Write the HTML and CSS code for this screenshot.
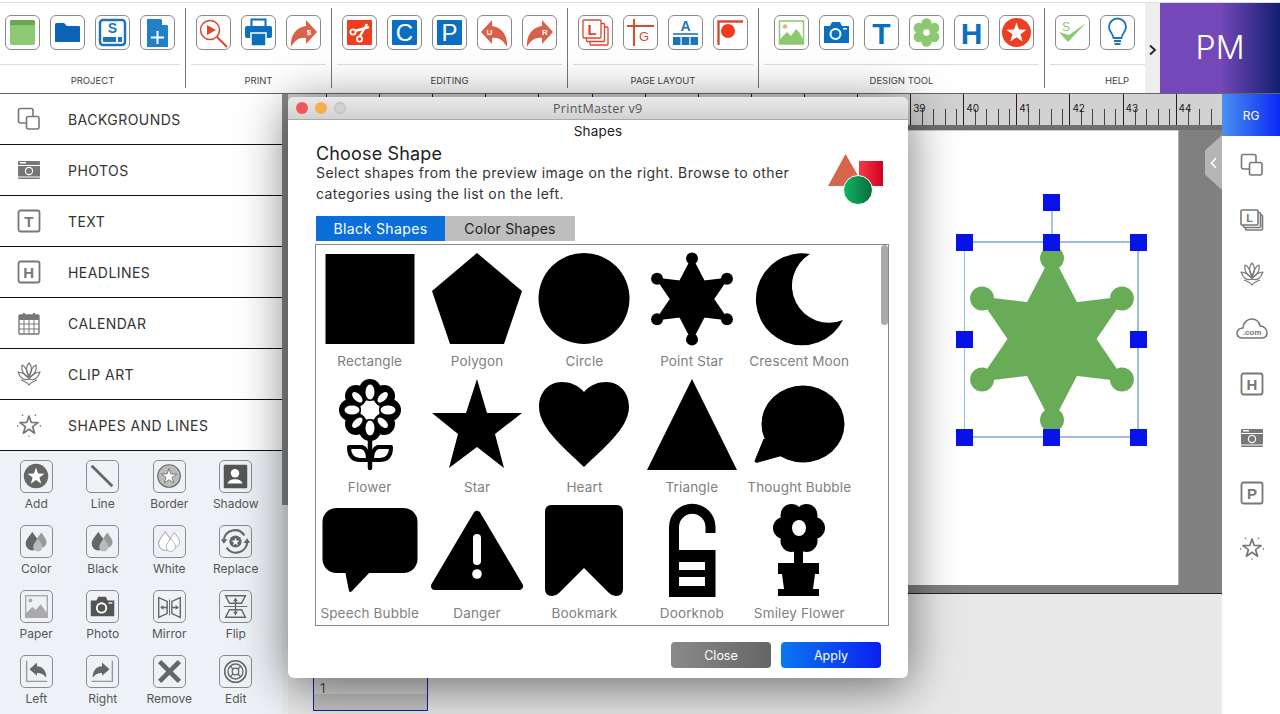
FILE: index.html
```html
<!DOCTYPE html>
<html lang="en">
<head>
  <meta charset="UTF-8" />
  <meta name="viewport" content="width=device-width, initial-scale=1.0"/>
  <title>PrintMaster v9</title>
  <link rel="stylesheet" href="styles.css">
</head>
<body>
  <svg class="defs" aria-hidden="true">
    <defs>
      <polygon id="star5" points="0,-10 2.35,-3.24 9.51,-3.09 3.8,1.24 5.88,8.09 0,4 -5.88,8.09 -3.8,1.24 -9.51,-3.09 -2.35,-3.24"/>
      <g id="sheriff">
        <polygon points="50,6 63,31 88,28 73,50 88,72 63,69 50,94 37,69 12,72 27,50 12,28 37,31" stroke-width="2" stroke-linejoin="round" stroke="currentColor"/>
        <circle cx="50" cy="6" r="6.5"/><circle cx="88" cy="28" r="6.5"/><circle cx="88" cy="72" r="6.5"/>
        <circle cx="50" cy="94" r="6.5"/><circle cx="12" cy="72" r="6.5"/><circle cx="12" cy="28" r="6.5"/>
      </g>
      <path id="arrow" d="M30 16 L19 4 V10 C9 11 3 20 4 31 C8 24 13 21 19 22 V28 Z"/>
      <g id="drop3">
        <path d="M12 6 C15 11 19 14 19 19 A7 7 0 0 1 5 19 C5 14 9 11 12 6Z"/>
      </g>
      <symbol id="i-bg" viewBox="0 0 24 24"><rect x="1.500" y="1.500" width="14.500" height="14.500" rx="2" fill="none" stroke="#777" stroke-width="1.600"/><rect x="9.500" y="9.500" width="12.500" height="12.500" rx="2" fill="#fff" stroke="#777" stroke-width="1.600"/></symbol>
      <symbol id="i-photo" viewBox="0 0 24 24"><rect x="1" y="3" width="22" height="18" rx="1" fill="#777"/><rect x="3" y="4" width="6" height="1.500" fill="#fff"/><rect x="1" y="7" width="22" height="1" fill="#fff"/><rect x="1" y="18.500" width="22" height="1" fill="#fff"/><circle cx="12" cy="13" r="3.600" fill="#777" stroke="#fff" stroke-width="1.200"/></symbol>
      <symbol id="i-t" viewBox="0 0 24 24"><rect x="1.500" y="1.500" width="21" height="21" rx="2" fill="none" stroke="#777" stroke-width="1.800"/><text x="12" y="17.500" class="ic-t" font-size="15" fill="#777">T</text></symbol>
      <symbol id="i-h" viewBox="0 0 24 24"><rect x="1.500" y="1.500" width="21" height="21" rx="2" fill="none" stroke="#777" stroke-width="1.800"/><text x="12" y="17.500" class="ic-t" font-size="15" fill="#777">H</text></symbol>
      <symbol id="i-p" viewBox="0 0 24 24"><rect x="1.500" y="1.500" width="21" height="21" rx="2" fill="none" stroke="#777" stroke-width="1.800"/><text x="12" y="17.500" class="ic-t" font-size="15" fill="#777">P</text></symbol>
      <symbol id="i-cal" viewBox="0 0 24 24"><rect x="2" y="4" width="20" height="19" rx="1" fill="none" stroke="#777" stroke-width="1.400"/><rect x="2" y="4" width="20" height="5" fill="#777"/><path d="M2 13H22M2 18H22M7 9V23M12 9V23M17 9V23" stroke="#777" stroke-width="1"/><path d="M7 6V2M17 6V2" stroke="#777" stroke-width="2"/></symbol>
      <symbol id="i-lotus" viewBox="0 0 24 24"><g fill="none" stroke="#777" stroke-width="1.200" stroke-linejoin="round"><path d="M12 1 C15 4 16 8 12 15 C8 8 9 4 12 1Z"/><path d="M5 3 C8 4 10 7 12 15 C6 13 4 9 5 3Z"/><path d="M19 3 C16 4 14 7 12 15 C18 13 20 9 19 3Z"/><path d="M1 10 C5 10 9 13 12 17 C7 19 3 16 1 10Z"/><path d="M23 10 C19 10 15 13 12 17 C17 19 21 16 23 10Z"/><path d="M4 18 C8 20 10 20 12 23 C14 20 16 20 20 18"/></g></symbol>
      <symbol id="i-shapes" viewBox="0 0 24 24"><use href="#star5" transform="translate(12 12.500) scale(.950)" fill="none" stroke="#777" stroke-width="1.800" stroke-linejoin="round"/><path d="M5 1.500L6 3M19 1.500L18 3M0 13H1.200M24 13H22.800M12 22.500V23.800" stroke="#777" stroke-width="1.300"/></symbol>
      <symbol id="i-layers" viewBox="0 0 24 24"><g fill="#fff" stroke="#777" stroke-width="1.600"><rect x="5.500" y="7" width="17" height="15" rx="1"/><rect x="3.500" y="4.500" width="17" height="15" rx="1"/><rect x="1" y="2" width="17" height="15" rx="1"/></g><text x="9.500" y="13.500" class="ic-t" font-size="11" fill="#777">L</text></symbol>
      <symbol id="i-cloud" viewBox="0 0 32 24"><path d="M7 21 C3 21 1 19 1 16 C1 13 4 11 7 11 C7 6 11 2 16 2 C20 2 23 5 24 9 C28 9 31 12 31 16 C31 19 29 21 25 21Z" fill="none" stroke="#777" stroke-width="1.500"/><text x="16" y="18" class="ic-t" font-size="8" fill="#777">.com</text></symbol>
    </defs>
  </svg>

  <header class="toolbar">
    <div class="grp grp-project">
      <div class="btns">
        <div class="tb"><svg viewBox="0 0 33 33"><rect x="4" y="4" width="25" height="25" rx="2" fill="#8dc973"/><path d="M4 9V6Q4 4 6 4H27Q29 4 29 6V9Z" fill="#6ea552"/></svg></div>
        <div class="tb"><svg viewBox="0 0 33 33"><path d="M4 9Q4 7 6 7H13L16 10H28Q29 10 29 11V26H4Z" fill="#0a63b5"/></svg></div>
        <div class="tb"><svg viewBox="0 0 33 33"><rect x="4" y="4" width="25" height="25" rx="3" fill="none" stroke="#1c75bc" stroke-width="2.500"/><text x="16.500" y="17" class="ic-t" font-size="14" fill="#1c75bc">S</text><rect x="7" y="21" width="13" height="5" fill="#1c75bc"/><rect x="22" y="21" width="4" height="5" fill="#1c75bc"/></svg></div>
        <div class="tb"><svg viewBox="0 0 33 33"><path d="M6 3H20L27 10V31H6Z" fill="#2280c8"/><path d="M21 3L27 9H21Z" fill="#fff"/><path d="M16.500 15V28M10 21.500H23" stroke="#fff" stroke-width="2"/></svg></div>
      </div>
      <div class="rule"></div>
      <div class="grp-label">PROJECT</div>
    </div>
    <div class="grp grp-print">
      <div class="btns">
        <div class="tb"><svg viewBox="0 0 33 33"><circle cx="13" cy="14" r="9.500" fill="none" stroke="#e0452c" stroke-width="1.500"/><path d="M10 9L19 14L10 19Z" fill="#e0452c"/><path d="M20 21L30 31" stroke="#e0452c" stroke-width="2"/></svg></div>
        <div class="tb"><svg viewBox="0 0 33 33"><rect x="9.500" y="3.500" width="14" height="8" fill="#fff" stroke="#0b6fbb" stroke-width="2"/><rect x="3" y="10" width="27" height="12" rx="2" fill="#0b6fbb"/><rect x="9" y="17" width="15" height="13" fill="#0b6fbb" stroke="#fff" stroke-width="1.500"/></svg></div>
        <div class="tb"><svg viewBox="0 0 33 33"><use href="#arrow" fill="#d9604a"/><text x="22" y="19" class="ic-t" font-size="8" fill="#fff">$</text></svg></div>
      </div>
      <div class="rule"></div>
      <div class="grp-label">PRINT</div>
    </div>
    <div class="grp grp-editing">
      <div class="btns">
        <div class="tb"><svg viewBox="0 0 33 33"><rect x="4" y="4" width="25" height="25" rx="1" fill="#ef3e1e"/><g fill="none" stroke="#fff" stroke-width="1.800"><circle cx="10" cy="16" r="2.600"/><circle cx="16.500" cy="23" r="2.600"/></g><path d="M12 15L26 11M17 20L24 8" stroke="#fff" stroke-width="2.400"/></svg></div>
        <div class="tb"><svg viewBox="0 0 33 33"><rect x="4" y="4" width="25" height="25" rx="1" fill="#0a6fc0"/><text x="16.500" y="25" class="ic-r" font-size="24" fill="#fff">C</text></svg></div>
        <div class="tb"><svg viewBox="0 0 33 33"><rect x="4" y="4" width="25" height="25" rx="1" fill="#0a6fc0"/><text x="16.500" y="25" class="ic-r" font-size="24" fill="#fff">P</text></svg></div>
        <div class="tb"><svg viewBox="0 0 33 33"><use href="#arrow" transform="matrix(-1 0 0 1 33 0)" fill="#d9604a"/><text x="11.500" y="19" class="ic-t" font-size="8" fill="#fff">U</text></svg></div>
        <div class="tb"><svg viewBox="0 0 33 33"><use href="#arrow" fill="#d9604a"/><text x="22" y="19" class="ic-t" font-size="8" fill="#fff">R</text></svg></div>
      </div>
      <div class="rule"></div>
      <div class="grp-label">EDITING</div>
    </div>
    <div class="grp grp-layout">
      <div class="btns">
        <div class="tb"><svg viewBox="0 0 33 33"><g fill="#fff" stroke="#e0452c" stroke-width="1.300"><rect x="11" y="11" width="18" height="18" rx="1"/><rect x="7.500" y="7.500" width="18" height="18" rx="1"/><rect x="4" y="4" width="18" height="18" rx="1"/></g><text x="13" y="19" class="ic-t" font-size="15" fill="#e0452c">L</text></svg></div>
        <div class="tb"><svg viewBox="0 0 33 33"><path d="M3 10H30M10 3V30" stroke="#dc4a32" stroke-width="2"/><text x="20" y="25" class="ic-r" font-size="13" fill="#dc4a32">G</text></svg></div>
        <div class="tb"><svg viewBox="0 0 33 33"><text x="16.500" y="15" class="ic-t" font-size="14" fill="#1c75bc">A</text><path d="M4 18H29" stroke="#1c75bc" stroke-width="1.600"/><path d="M4 21H11.500V29H4ZM12.700 21H20.300V29H12.700ZM21.500 21H29V29H21.500Z" fill="#1c75bc"/></svg></div>
        <div class="tb"><svg viewBox="0 0 33 33"><path d="M29 5.500H4.500V29" fill="none" stroke="#dc4a32" stroke-width="2.400"/><circle cx="14" cy="15" r="7" fill="#f03a1c"/></svg></div>
      </div>
      <div class="rule"></div>
      <div class="grp-label">PAGE LAYOUT</div>
    </div>
    <div class="grp grp-design">
      <div class="btns">
        <div class="tb"><svg viewBox="0 0 33 33"><rect x="4.500" y="5" width="24" height="23" fill="#fff" stroke="#8dc973" stroke-width="1.500"/><circle cx="10" cy="10.500" r="2.300" fill="#e8b27a"/><path d="M5 28V23L12 16L16 20L21 13L24 16L28 23V28Z" fill="#8dc973"/></svg></div>
        <div class="tb"><svg viewBox="0 0 33 33"><path d="M4 10H10L12 6H20L22 10H29V27H4Z" fill="#0a6fc0"/><circle cx="15.500" cy="18" r="5" fill="none" stroke="#fff" stroke-width="2"/><rect x="23" y="12" width="4" height="1.500" fill="#fff"/></svg></div>
        <div class="tb"><svg viewBox="0 0 33 33"><text x="16.500" y="28" class="ic-t" font-size="30" fill="#0a6fc0">T</text></svg></div>
        <div class="tb"><svg viewBox="0 0 33 33"><g fill="#8dc973"><circle cx="16.500" cy="7.500" r="5.200"/><circle cx="16.500" cy="25.500" r="5.200"/><circle cx="8.800" cy="12" r="5.200"/><circle cx="24.200" cy="12" r="5.200"/><circle cx="8.800" cy="21" r="5.200"/><circle cx="24.200" cy="21" r="5.200"/><circle cx="16.500" cy="16.500" r="6"/></g><circle cx="16.500" cy="16.500" r="3.300" fill="#fff"/></svg></div>
        <div class="tb"><svg viewBox="0 0 33 33"><text x="16.500" y="28" class="ic-t" font-size="30" fill="#0a6fc0">H</text></svg></div>
        <div class="tb"><svg viewBox="0 0 33 33"><circle cx="16.500" cy="16.500" r="14.500" fill="#ee3f22"/><use href="#star5" transform="translate(16.500 17) scale(1.050)" fill="#fff"/></svg></div>
      </div>
      <div class="rule"></div>
      <div class="grp-label">DESIGN TOOL</div>
    </div>
    <div class="grp grp-help">
      <div class="btns">
        <div class="tb"><svg viewBox="0 0 33 33"><path d="M3 16L12 26L30 7L13 19Z" fill="#8dc973"/><text x="10" y="15" class="ic-r" font-size="12" fill="#8dc973">S</text></svg></div>
        <div class="tb"><svg viewBox="0 0 33 33"><path d="M12.500 22C12 17 8 16 8 11A8.500 8.500 0 0 1 25 11C25 16 21 17 20.500 22Z" fill="none" stroke="#1c75bc" stroke-width="1.800"/><path d="M13 25H20M13.500 28H19.500" stroke="#1c75bc" stroke-width="2"/></svg></div>
      </div>
      <div class="rule"></div>
      <div class="grp-label">HELP</div>
    </div>
    <div class="more">
      <svg viewBox="0 0 10 12"><path d="M2 1.500L7 6L2 10.500" fill="none" stroke="#222" stroke-width="1.800"/></svg>
    </div>
    <div class="brand">PM</div>
  </header>

  <div class="workspace">
    <aside class="panel">
      <div class="panel-main">
        <nav class="menu">
          <div class="menu-row"><svg class="menu-ic"><use href="#i-bg"/></svg>BACKGROUNDS</div>
          <div class="menu-row"><svg class="menu-ic"><use href="#i-photo"/></svg>PHOTOS</div>
          <div class="menu-row"><svg class="menu-ic"><use href="#i-t"/></svg>TEXT</div>
          <div class="menu-row"><svg class="menu-ic"><use href="#i-h"/></svg>HEADLINES</div>
          <div class="menu-row"><svg class="menu-ic"><use href="#i-cal"/></svg>CALENDAR</div>
          <div class="menu-row"><svg class="menu-ic"><use href="#i-lotus"/></svg>CLIP ART</div>
          <div class="menu-row"><svg class="menu-ic"><use href="#i-shapes"/></svg>SHAPES AND LINES</div>
        </nav>
        <div class="tools">
          <div class="tool"><div class="tool-ic"><svg viewBox="0 0 33 33"><circle cx="16" cy="16" r="13" fill="#666"/><use href="#star5" transform="translate(16 16.500) scale(.950)" fill="#fff"/></svg></div>Add</div>
          <div class="tool"><div class="tool-ic"><svg viewBox="0 0 33 33"><path d="M5 5L27 27" stroke="#666" stroke-width="3"/></svg></div>Line</div>
          <div class="tool"><div class="tool-ic"><svg viewBox="0 0 33 33"><circle cx="16" cy="16" r="12" fill="#bbb" stroke="#666" stroke-width="1.200"/><use href="#star5" transform="translate(16 16.500) scale(.850)" fill="#fff" stroke="#666"/></svg></div>Border</div>
          <div class="tool"><div class="tool-ic"><svg viewBox="0 0 33 33"><rect x="4" y="4" width="25" height="25" rx="1" fill="#555"/><circle cx="16" cy="13" r="4.500" fill="#fff"/><path d="M8 24C9 18 23 18 24 24Z" fill="#fff"/></svg></div>Shadow</div>
          <div class="tool"><div class="tool-ic"><svg viewBox="0 0 33 33"><use href="#drop3" fill="#666"/><use href="#drop3" transform="translate(12 2) scale(.800)" fill="#999"/><use href="#drop3" transform="translate(9.500 9) scale(.700)" fill="#bbb"/></svg></div>Color</div>
          <div class="tool"><div class="tool-ic"><svg viewBox="0 0 33 33"><use href="#drop3" fill="#666"/><use href="#drop3" transform="translate(12 2) scale(.800)" fill="#999"/><use href="#drop3" transform="translate(9.500 9) scale(.700)" fill="#bbb"/></svg></div>Black</div>
          <div class="tool"><div class="tool-ic"><svg viewBox="0 0 33 33"><g fill="#fff" stroke="#888" stroke-width=".9"><use href="#drop3"/><use href="#drop3" transform="translate(12 2) scale(.800)"/><use href="#drop3" transform="translate(9.500 9) scale(.700)"/></g></svg></div>White</div>
          <div class="tool"><div class="tool-ic"><svg viewBox="0 0 33 33"><path d="M4 15A12 12 0 0 1 26 10M29 17A12 12 0 0 1 7 23" fill="none" stroke="#666" stroke-width="2.200"/><path d="M1 14L8 14L4 19ZM32 18L25 18L29 13Z" fill="#666"/><circle cx="16.500" cy="16.500" r="6.500" fill="#666"/><use href="#star5" transform="translate(16.500 17) scale(.450)" fill="#fff"/></svg></div>Replace</div>
          <div class="tool"><div class="tool-ic"><svg viewBox="0 0 33 33"><rect x="5" y="5" width="23" height="23" fill="none" stroke="#aaa" stroke-width="1.500"/><circle cx="10" cy="10" r="2" fill="#aaa"/><path d="M5 28V24L12 17L16 20L21 14L28 24V28Z" fill="#aaa"/></svg></div>Paper</div>
          <div class="tool"><div class="tool-ic"><svg viewBox="0 0 33 33"><path d="M4 10H10L12 6H20L22 10H29V27H4Z" fill="#555"/><circle cx="15.500" cy="18" r="5" fill="none" stroke="#fff" stroke-width="2"/><rect x="23" y="12" width="4" height="1.500" fill="#fff"/></svg></div>Photo</div>
          <div class="tool"><div class="tool-ic"><svg viewBox="0 0 33 33"><path d="M5 7L14 11V24L5 28ZM28 7L19 11V24L28 28Z" fill="none" stroke="#666" stroke-width="1.500"/><path d="M16.500 9V26" stroke="#666"/><path d="M8 17.500H14M25 17.500H19" stroke="#666" stroke-width="1.500"/><path d="M10 15L6.500 17.500L10 20ZM23 15L26.500 17.500L23 20Z" fill="#666"/></svg></div>Mirror</div>
          <div class="tool"><div class="tool-ic"><svg viewBox="0 0 33 33"><path d="M6 5L27 5L23 13H10ZM6 28L27 28L23 20H10Z" fill="none" stroke="#666" stroke-width="1.500"/><path d="M4 16.500H29" stroke="#666"/><path d="M16.500 9V24" stroke="#666" stroke-width="1.500"/><path d="M14 11L16.500 7L19 11ZM14 22L16.500 26L19 22Z" fill="#666"/></svg></div>Flip</div>
          <div class="tool"><div class="tool-ic"><svg viewBox="0 0 33 33"><path d="M6 5V27H28" fill="none" stroke="#999" stroke-width="1.500"/><path d="M9 14L17 7V11C23 11 27 16 27 23C24 19 21 18 17 18V21Z" fill="#666"/></svg></div>Left</div>
          <div class="tool"><div class="tool-ic"><svg viewBox="0 0 33 33"><path d="M27 5V27H5" fill="none" stroke="#999" stroke-width="1.500"/><path d="M24 14L16 7V11C10 11 6 16 6 23C9 19 12 18 16 18V21Z" fill="#666"/></svg></div>Right</div>
          <div class="tool"><div class="tool-ic"><svg viewBox="0 0 33 33"><path d="M6 6L27 27M27 6L6 27" stroke="#666" stroke-width="5"/></svg></div>Remove</div>
          <div class="tool"><div class="tool-ic"><svg viewBox="0 0 33 33"><g fill="none" stroke="#666"><circle cx="16.500" cy="16.500" r="11.500" stroke-width="1.600"/><circle cx="16.500" cy="16.500" r="8" stroke-width="1.400"/><circle cx="16.500" cy="16.500" r="3.500" stroke-width="1.400"/><path d="M11 11L14 14M22 11L19 14M11 22L14 19M22 22L19 19" stroke-width="1.400"/></g></svg></div>Edit</div>
        </div>
      </div>
      <div class="panel-scroll"><div class="panel-thumb"></div></div>
    </aside>

    <main class="stage">
      <div class="ruler">
        <div class="ruler-track">
          <div class="tick"></div><div class="tick"></div><div class="tick"></div><div class="tick"></div>
          <div class="tick"></div><div class="tick"></div><div class="tick"></div><div class="tick"></div>
          <div class="tick"></div><div class="tick"></div><div class="tick"></div><div class="tick"></div>
          <div class="tick">39</div><div class="tick">40</div><div class="tick">41</div><div class="tick">42</div>
          <div class="tick">43</div><div class="tick">44</div>
        </div>
      </div>
      <div class="canvas">
        <div class="page">
          <div class="selection">
            <div class="rotate-stem"></div>
            <span class="handle h-rot"></span>
            <span class="handle h-tl"></span><span class="handle h-tc"></span><span class="handle h-tr"></span>
            <span class="handle h-ml"></span><span class="handle h-mr"></span>
            <span class="handle h-bl"></span><span class="handle h-bc"></span><span class="handle h-br"></span>
            <svg class="sel-star" viewBox="0 0 100 100"><use href="#sheriff"/></svg>
          </div>
        </div>
        <div class="edge-tab"><svg viewBox="0 0 10 16"><path d="M7 3L2.500 8L7 13" fill="none" stroke="#fff" stroke-width="1.500"/></svg></div>
      </div>
      <div class="page-strip">
        <div class="thumb"><span class="thumb-num">1</span></div>
      </div>
    </main>

    <aside class="rail">
      <div class="rail-head">RG</div>
      <div class="rail-icons">
        <svg><use href="#i-bg"/></svg>
        <svg><use href="#i-layers"/></svg>
        <svg><use href="#i-lotus"/></svg>
        <svg class="wide"><use href="#i-cloud"/></svg>
        <svg><use href="#i-h"/></svg>
        <svg><use href="#i-photo"/></svg>
        <svg><use href="#i-p"/></svg>
        <svg><use href="#i-shapes"/></svg>
      </div>
    </aside>
  </div>

  <section class="dialog">
    <div class="titlebar">
      <span class="light red"></span><span class="light amber"></span><span class="light off"></span>
      <span class="title">PrintMaster v9</span>
    </div>
    <div class="dlg-name">Shapes</div>
    <div class="dlg-head">
      <div>
        <h2>Choose Shape</h2>
        <p>Select shapes from the preview image on the right. Browse to other categories using the list on the left.</p>
      </div>
      <svg class="dlg-logo" viewBox="0 0 56 52">
        <defs>
          <linearGradient id="lgTri" x1="0" y1="0" x2="1" y2="0"><stop offset="0" stop-color="#cf6a4c"/><stop offset="1" stop-color="#e2604a"/></linearGradient>
          <linearGradient id="lgSq" x1="0" y1="0" x2="1" y2="0"><stop offset="0" stop-color="#f53a48"/><stop offset="1" stop-color="#d00020"/></linearGradient>
          <linearGradient id="lgCi" x1="0" y1="0" x2="1" y2="0"><stop offset="0" stop-color="#10b566"/><stop offset="1" stop-color="#0a6c3e"/></linearGradient>
        </defs>
        <path d="M17.500 0L36 32H0Z" fill="url(#lgTri)"/>
        <rect x="31" y="7" width="24" height="25" fill="url(#lgSq)"/>
        <circle cx="30" cy="36" r="14.500" fill="url(#lgCi)" stroke="#fff"/>
      </svg>
    </div>
    <div class="tabs">
      <div class="tab active">Black Shapes</div>
      <div class="tab">Color Shapes</div>
    </div>
    <div class="shape-box">
      <div class="shape-grid">
        <figure class="shape"><svg viewBox="0 0 92 92"><rect x="1.500" y="1" width="89" height="90"/></svg><figcaption>Rectangle</figcaption></figure>
        <figure class="shape"><svg viewBox="0 0 92 92"><polygon points="46,0 91,38 73,91 19,91 1,38"/></svg><figcaption>Polygon</figcaption></figure>
        <figure class="shape"><svg viewBox="0 0 92 92"><circle cx="46" cy="45.500" r="45.500"/></svg><figcaption>Circle</figcaption></figure>
        <figure class="shape"><svg viewBox="0 0 100 100"><use href="#sheriff" color="#000"/></svg><figcaption>Point Star</figcaption></figure>
        <figure class="shape"><svg viewBox="0 0 92 92"><path d="M57 1A46 46 0 1 0 90 67A37 37 0 0 1 57 1Z"/></svg><figcaption>Crescent Moon</figcaption></figure>

        <figure class="shape"><svg viewBox="0 0 92 92">
          <g><circle cx="46" cy="11" r="11"/><circle cx="60" cy="17" r="11"/><circle cx="66" cy="31" r="11"/><circle cx="60" cy="45" r="11"/><circle cx="46" cy="51" r="11"/><circle cx="32" cy="45" r="11"/><circle cx="26" cy="31" r="11"/><circle cx="32" cy="17" r="11"/></g>
          <g fill="#fff"><ellipse cx="46" cy="13" rx="4.500" ry="7.500"/><ellipse cx="46" cy="49" rx="4.500" ry="7.500"/><ellipse cx="28" cy="31" rx="7.500" ry="4.500"/><ellipse cx="64" cy="31" rx="7.500" ry="4.500"/><ellipse cx="58.700" cy="18.300" rx="3.500" ry="6.500" transform="rotate(45 58.700 18.300)"/><ellipse cx="33.300" cy="18.300" rx="3.500" ry="6.500" transform="rotate(-45 33.300 18.300)"/><ellipse cx="58.700" cy="43.700" rx="3.500" ry="6.500" transform="rotate(-45 58.700 43.700)"/><ellipse cx="33.300" cy="43.700" rx="3.500" ry="6.500" transform="rotate(45 33.300 43.700)"/><circle cx="46" cy="31" r="3.500"/></g>
          <path d="M46 60V89" stroke="#000" stroke-width="4.500" stroke-linecap="round"/>
          <path d="M25 68H38Q44 70 44 81H36Q25 81 25 68ZM67 68H54Q48 70 48 81H56Q67 81 67 68Z" fill="#fff" stroke="#000" stroke-width="4" stroke-linejoin="round"/>
        </svg><figcaption>Flower</figcaption></figure>
        <figure class="shape"><svg viewBox="0 0 92 92"><polygon points="46,0 56,34 91,34 64,55 73,89 46,68 18,89 27,55 1,34 35,34"/></svg><figcaption>Star</figcaption></figure>
        <figure class="shape"><svg viewBox="0 0 92 92"><path d="M46 13C40 6 32 3 24 3C10 3 1 14 1 28C1 50 30 72 46 88C62 72 91 50 91 28C91 14 82 3 68 3C60 3 52 6 46 13Z"/></svg><figcaption>Heart</figcaption></figure>
        <figure class="shape"><svg viewBox="0 0 92 92"><polygon points="46,0 91,91 1,91"/></svg><figcaption>Triangle</figcaption></figure>
        <figure class="shape"><svg viewBox="0 0 92 92"><ellipse cx="50" cy="45" rx="41.500" ry="38.500"/><path d="M11 60L2 82Q2 84 5 83L30 76Z" stroke="#000" stroke-linejoin="round"/></svg><figcaption>Thought Bubble</figcaption></figure>

        <figure class="shape"><svg viewBox="0 0 92 92"><rect x="-1.500" y="3" width="95" height="65" rx="14"/><path d="M21 66L25 86Q26 88 28 86L47 66Z"/></svg><figcaption>Speech Bubble</figcaption></figure>
        <figure class="shape"><svg viewBox="0 0 92 92"><polygon points="46,10 88,81 4,81" stroke="#000" stroke-width="8" stroke-linejoin="round"/><rect x="42" y="29" width="8" height="31" rx="4" fill="#fff"/><circle cx="46" cy="69" r="4.800" fill="#fff"/></svg><figcaption>Danger</figcaption></figure>
        <figure class="shape"><svg viewBox="0 0 92 92"><path d="M14 0H78Q85 0 85 7V84Q85 91 78 91Q74 91 71 88L46 63L21 88Q18 91 14 91Q7 91 7 84V7Q7 0 14 0Z"/></svg><figcaption>Bookmark</figcaption></figure>
        <figure class="shape"><svg viewBox="0 0 92 92"><path d="M23 92V22A23 23 0 0 1 69.500 22V28H59.500V22A13 13 0 0 0 33 22V45H69.500V92Z"/><rect x="33" y="57" width="26" height="8" fill="#fff"/><rect x="33" y="72" width="26" height="9" fill="#fff"/></svg><figcaption>Doorknob</figcaption></figure>
        <figure class="shape"><svg viewBox="0 0 92 92"><circle cx="38.500" cy="10" r="11"/><circle cx="53.500" cy="10" r="11"/><circle cx="31" cy="23" r="11"/><circle cx="61" cy="23" r="11"/><circle cx="38.500" cy="36" r="11"/><circle cx="53.500" cy="36" r="11"/><rect x="41" y="40" width="9" height="20"/><polygon points="25,58 66,58 66,69 62,69 60,84 66,84 66,91 25,91 25,84 31,84 29,69 25,69"/><ellipse cx="46" cy="23" rx="7" ry="8" fill="#fff"/></svg><figcaption>Smiley Flower</figcaption></figure>
      </div>
      <div class="box-scroll"></div>
    </div>
    <div class="dlg-actions">
      <button class="btn btn-close">Close</button>
      <button class="btn btn-apply">Apply</button>
    </div>
  </section>
</body>
</html>
```

FILE: styles.css
```css
* {
  box-sizing: border-box;
}

html, body {
  height: 100%;
}

body {
  margin: 0;
  width: 1280px;
  height: 714px;
  overflow: hidden;
  background: #fff;
  font-family: Inter, 'Liberation Sans', sans-serif;
  color: #333;
  display: flex;
  flex-direction: column;
  position: relative;
}

.defs {
  position: absolute;
  width: 0;
  height: 0;
}

svg {
  display: block;
}

.ic-t {
  font-family: 'Liberation Sans', sans-serif;
  font-weight: bold;
  text-anchor: middle;
}

.ic-r {
  font-family: 'Liberation Sans', sans-serif;
  text-anchor: middle;
}

/* top toolbar */
.toolbar {
  flex: none;
  height: 92px;
  margin-top: 2px;
  border-top: 1px solid #ddd;
  border-bottom: 1px solid #666;
  display: flex;
  align-items: flex-start;
  background: #fff;
}

.grp {
  height: 80px;
  margin-top: 5px;
  padding-top: 7px;
  border-right: 1px solid #777;
  flex: none;
}

.grp-project { width: 186px; }
.grp-print { width: 146px; }
.grp-editing { width: 236px; }
.grp-layout { width: 191px; }
.grp-design { width: 286px; }
.grp-help { width: 100px; border-right: none; }

.btns {
  display: flex;
  gap: 10px;
  padding-left: 10px;
}

.grp-project .btns { padding-left: 5px; }
.grp-design .btns { padding-left: 15px; }

.tb {
  width: 35px;
  height: 35px;
  border: 1px solid #8a8a8a;
  border-radius: 6px;
  background: #fff;
}

.tb svg {
  overflow: visible;
}

.rule {
  height: 1px;
  background: #ddd;
  margin: 14px 5px 0;
}

.grp-project .rule { margin-left: 0; }
.grp-help .rule { margin-right: 0; }

.grp-label {
  font-size: 9.5px;
  text-align: center;
  color: #444;
  line-height: 12px;
  margin-top: 10px;
}

.grp-help .grp-label {
  padding-left: 44px;
}

.more {
  width: 15px;
  height: 90px;
  background: #eee;
  flex: none;
  display: flex;
  align-items: center;
  justify-content: center;
  padding-top: 4px;
}

.more svg {
  width: 10px;
  height: 12px;
}

.brand {
  flex: 1;
  height: 90px;
  padding-bottom: 2px;
  background: linear-gradient(90deg, #7448b8 0%, #7448b8 50%, #121f70 100%);
  color: #fff;
  font-size: 32px;
  font-weight: 300;
  display: flex;
  align-items: center;
  justify-content: center;
}

/* main area */
.workspace {
  flex: 1;
  min-height: 0;
  display: flex;
}

.panel {
  width: 288px;
  flex: none;
  display: flex;
  background: #fff;
}

.panel-main {
  width: 282px;
  display: flex;
  flex-direction: column;
}

.menu-row {
  height: 51px;
  border-bottom: 1px solid #111;
  display: flex;
  align-items: center;
  font-size: 14px;
  color: #333;
  padding-left: 17px;
  letter-spacing: 0.45px;
}

.menu-ic {
  width: 24px;
  height: 24px;
  margin-right: 27px;
  flex: none;
}

.tools {
  flex: 1;
  background: #eef2f6;
  padding: 9px 0 0 3px;
  display: grid;
  grid-template-columns: repeat(4, 66.5px);
  grid-auto-rows: 65px;
}

.tool {
  display: flex;
  flex-direction: column;
  align-items: center;
  font-size: 12px;
  color: #555;
  line-height: 14px;
}

.tool-ic {
  width: 33px;
  height: 33px;
  border: 1px solid #8a8a8a;
  border-radius: 5px;
  margin-bottom: 4px;
  flex: none;
}

.tool-ic svg {
  width: 31px;
  height: 31px;
}

.panel-scroll {
  flex: 1;
  background: #eee;
}

.panel-thumb {
  height: 411px;
  background: #8a8a8a;
}

.stage {
  flex: 1;
  min-width: 0;
  display: flex;
  flex-direction: column;
}

.ruler {
  height: 36px;
  flex: none;
  background: #d2d2d2;
  border-bottom: 5px solid #6f6f6f;
  overflow: hidden;
}

.ruler-track {
  display: flex;
  margin-left: -15px;
  height: 31px;
}

.tick {
  width: 53.1px;
  flex: none;
  height: 31px;
  padding: 8px 0 0 2px;
  font-size: 10px;
  line-height: 12px;
  color: #222;
  border-left: 1px solid #222;
  background:
    repeating-linear-gradient(90deg, transparent 0, transparent 10.6px, #444 10.6px, #444 11.6px) bottom left / 100% 16px no-repeat;
}

.canvas {
  height: 463px;
  flex: none;
  background: #808080;
  padding-right: 43px;
  position: relative;
}

.page {
  height: 455px;
  background: #fff;
  border-top: 1px solid #ccc;
  border-right: 1px solid #aaa;
  position: relative;
}

.selection {
  position: absolute;
  right: 39px;
  top: 110px;
  width: 175px;
  height: 197px;
  border: 1px solid #9dbde4;
  border-width: 2px 2px 2px 1px;
}

.rotate-stem {
  position: absolute;
  left: 86px;
  top: -40px;
  width: 2px;
  height: 40px;
  background: #a9c3e6;
}

.handle {
  position: absolute;
  width: 17px;
  height: 17px;
  background: #0713e8;
  z-index: 2;
}

.h-rot { left: 78px; top: -49px; }
.h-tl { left: -9px; top: -9px; }
.h-tc { left: 78px; top: -9px; }
.h-tr { right: -10px; top: -9px; }
.h-ml { left: -9px; top: 88px; }
.h-mr { right: -10px; top: 88px; }
.h-bl { left: -9px; bottom: -10px; }
.h-bc { left: 78px; bottom: -10px; }
.h-br { right: -10px; bottom: -10px; }

.sel-star {
  position: absolute;
  left: -5px;
  top: 4px;
  width: 184px;
  height: 184px;
  fill: #69ac58;
  color: #69ac58;
}

.edge-tab {
  position: absolute;
  right: 0;
  top: 5px;
  width: 17px;
  height: 55px;
  background: #b5b5b5;
  clip-path: polygon(100% 0, 0 28%, 0 72%, 100% 100%);
  display: flex;
  align-items: center;
  justify-content: center;
}

.edge-tab svg {
  width: 10px;
  height: 16px;
}

.page-strip {
  flex: 1;
  background: #e8e8e8;
  border-top: 1px solid #222;
  padding: 7px 0 3px 25px;
  display: flex;
}

.thumb {
  width: 115px;
  border: 1px solid #1520b0;
  background: linear-gradient(180deg, #d8d8d8 0 85%, #c4c4c4 85% 100%);
  display: flex;
  align-items: flex-end;
  padding: 0 0 14px 6px;
  font-size: 13px;
  color: #555;
}

.rail {
  width: 58px;
  flex: none;
  background: #fff;
  display: flex;
  flex-direction: column;
}

.rail-head {
  height: 42px;
  background: linear-gradient(90deg, #4a90f0, #0a2af5);
  color: #fff;
  font-size: 12px;
  display: flex;
  align-items: center;
  justify-content: center;
}

.rail-icons {
  padding-top: 17px;
  display: flex;
  flex-direction: column;
  align-items: center;
  gap: 30.7px;
}

.rail-icons svg {
  width: 24px;
  height: 24px;
  margin-left: 2px;
}

.rail-icons svg.wide {
  width: 32px;
}

/* modal, sits over everything */
.dialog {
  position: absolute;
  left: 288px;
  top: 97px;
  width: 620px;
  height: 581px;
  background: #fff;
  border-radius: 6px;
  overflow: hidden;
  box-shadow: 0 8px 50px rgba(0, 0, 0, 0.55);
  z-index: 10;
}

.titlebar {
  height: 23px;
  background: linear-gradient(180deg, #e9e9e9, #d2d2d2);
  border-bottom: 1px solid #aaa;
  display: flex;
  align-items: center;
  padding-left: 8px;
  gap: 7px;
  position: relative;
}

.light {
  width: 12px;
  height: 12px;
  border-radius: 50%;
}

.red { background: #f0565a; }
.amber { background: #f5b04a; }
.off { background: #d0d0d0; border: 1px solid #bbb; }

.title {
  position: absolute;
  left: 265px;
  top: 3px;
  font-family: 'Open Sans', sans-serif;
  font-size: 12.5px;
  color: #555;
  letter-spacing: 0.3px;
}

.dlg-name {
  text-align: center;
  font-size: 13.5px;
  line-height: 22px;
  color: #222;
  letter-spacing: 0.2px;
}

.dlg-head {
  display: flex;
  justify-content: space-between;
  padding: 2px 24px 0 28px;
  height: 62px;
}

.dlg-head h2 {
  margin: 0;
  font-size: 18px;
  line-height: 20px;
  font-weight: 400;
  color: #222;
  letter-spacing: 0.15px;
}

.dlg-head p {
  margin: -2px 0 0;
  width: 490px;
  font-size: 14px;
  line-height: 21px;
  color: #333;
  letter-spacing: 0.42px;
}

.dlg-logo {
  width: 56px;
  height: 52px;
  margin-top: 10px;
  flex: none;
  overflow: visible;
}

.tabs {
  display: flex;
  margin: 12px 0 3px 28px;
  height: 25px;
}

.tab {
  width: 130px;
  background: #bebebe;
  font-size: 14px;
  color: #222;
  display: flex;
  align-items: center;
  justify-content: center;
  letter-spacing: 0.2px;
}

.tab.active {
  width: 129px;
  background: #0a6fd8;
  color: #fff;
  letter-spacing: 0.4px;
}

.shape-box {
  margin-left: 27px;
  width: 574px;
  height: 382px;
  border: 1px solid #888;
  padding-top: 8px;
  position: relative;
  overflow: hidden;
}

.shape-grid {
  display: grid;
  grid-template-columns: repeat(5, 107.4px);
  row-gap: 8px;
}

.shape {
  margin: 0;
  display: flex;
  flex-direction: column;
  align-items: center;
}

.shape svg {
  width: 92px;
  height: 92px;
  overflow: visible;
  fill: #000;
}

.shape figcaption {
  margin-top: 6px;
  font-size: 13.5px;
  letter-spacing: 0.15px;
  line-height: 20px;
  color: #808080;
  white-space: nowrap;
}

.box-scroll {
  position: absolute;
  right: 0;
  top: 0;
  width: 7px;
  height: 80px;
  background: #aaa;
  border-radius: 4px;
}

.dlg-actions {
  display: flex;
  justify-content: flex-end;
  gap: 10px;
  margin-top: 16px;
  padding-right: 27px;
}

.btn {
  width: 100px;
  height: 26px;
  border: none;
  border-radius: 4px;
  color: #fff;
  font-family: inherit;
  font-size: 12.5px;
}

.btn-close {
  background: linear-gradient(90deg, #8a8a8a, #656565);
}

.btn-apply {
  background: linear-gradient(90deg, #0a78f0, #0a20f0);
}
```
